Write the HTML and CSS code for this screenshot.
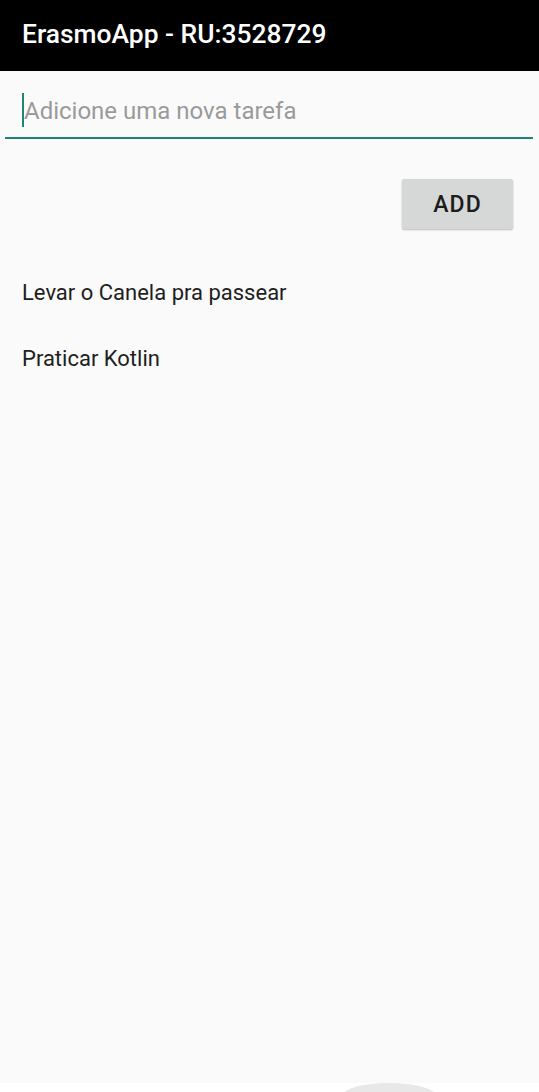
FILE: index.html
```html
<!DOCTYPE html>
<html lang="pt">
<head>
<meta charset="utf-8">
<link rel="stylesheet" href="styles.css">
</head>
<body>
<div class="screen">
  <header class="appbar">ErasmoApp - RU:3528729</header>
  <main class="content">
    <div class="field">
      <span class="cursor"></span>
      <span class="placeholder">Adicione uma nova tarefa</span>
    </div>
    <div class="actions">
      <button class="add">ADD</button>
    </div>
    <ul class="list">
      <li>Levar o Canela pra passear</li>
      <li>Praticar Kotlin</li>
    </ul>
  </main>
  <footer class="bottom">
    <div class="handle"></div>
  </footer>
</div>
</body>
</html>
```
FILE: styles.css
```css
* { box-sizing: border-box; }
html, body { margin: 0; padding: 0; }
body {
  background: #fafafa;
  font-family: Roboto, "Noto Sans", sans-serif;
}
.screen {
  width: 539px;
  height: 1092px;
  display: flex;
  flex-direction: column;
  overflow: hidden;
}
.appbar {
  height: 71px;
  background: #000;
  color: #fff;
  font-size: 26.4px;
  font-weight: 500;
  padding: 18px 0 0 22px;
  line-height: 32px;
}
.content {
  flex: 1;
  display: flex;
  flex-direction: column;
}
.field {
  margin: 22px 6px 0 5px;
  height: 46px;
  border-bottom: 2px solid #1b8576;
  display: flex;
  align-items: flex-start;
  padding-left: 17px;
}
.cursor {
  width: 2px;
  height: 34px;
  background: #1b8576;
}
.placeholder {
  color: #9a9a9a;
  font-size: 24px;
  line-height: 37px;
}
.actions {
  display: flex;
  justify-content: flex-end;
  padding: 40px 26px 0 0;
}
.add {
  width: 111px;
  height: 50px;
  border: none;
  border-radius: 2px;
  background: #d6d7d7;
  color: #1c1c1c;
  font-family: Roboto, "Noto Sans", sans-serif;
  font-size: 23px;
  font-weight: 500;
  letter-spacing: 1px;
  box-shadow: 0 1px 2px rgba(0,0,0,0.25);
  padding: 0;
}
.list {
  list-style: none;
  margin: 0;
  padding: 51px 0 0 22px;
  display: flex;
  flex-direction: column;
  gap: 40px;
}
.list li {
  font-size: 22px;
  line-height: 26px;
  color: #1e1e1e;
}
.bottom {
  height: 9px;
  background: #fff;
  display: flex;
  justify-content: flex-start;
  padding-left: 341px;
}
.handle {
  width: 96px;
  height: 20px;
  background: #e8e8e8;
  border-radius: 48px 48px 0 0 / 14px 14px 0 0;
}
```
